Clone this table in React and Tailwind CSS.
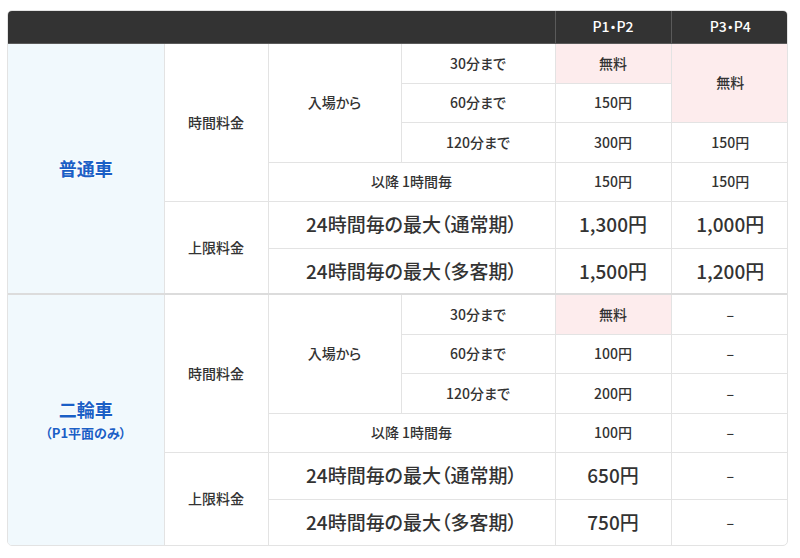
const FONT = { fontFamily: '"Noto Sans CJK JP", "Noto Sans", sans-serif' }

const cell = 'border border-[#e3e3e3] text-center align-middle'
const small = 'text-[14px] font-medium'
const big = 'text-[19px] font-medium'
const pink = 'bg-[#fdeced]'

function Section({ name, note, rows, last }) {
  const [r30, r60, r120, after, normal, busy] = rows
  const sep = last ? '' : 'border-b-2 border-b-[#dcdcdc]'
  return (
    <>
      <tr className="h-[40px]">
        <td rowSpan={6} className={`${cell} ${sep} bg-[#f1f9fd]`}>
          <div className="text-[18px] font-bold text-[#1b5fc6] leading-tight [text-shadow:0_0_3px_#fff,0_0_3px_#fff]">{name}</div>
          {note && <div className="text-[13px] font-bold text-[#1b5fc6] mt-0.5 [text-shadow:0_0_3px_#fff]">{note}</div>}
        </td>
        <td rowSpan={4} className={`${cell} ${small}`}>時間料金</td>
        <td rowSpan={3} className={`${cell} ${small}`}>入場から</td>
        <td className={`${cell} ${small}`}>30分まで</td>
        <td className={`${cell} ${small} ${r30[0].pink ? pink : ''}`}>{r30[0].v}</td>
        {r30[1] && (
          <td rowSpan={r30[1].span || 1} className={`${cell} ${small} ${r30[1].pink ? pink : ''}`}>{r30[1].v}</td>
        )}
      </tr>
      <tr className="h-[39px]">
        <td className={`${cell} ${small}`}>60分まで</td>
        <td className={`${cell} ${small}`}>{r60[0].v}</td>
        {r60[1] && <td className={`${cell} ${small}`}>{r60[1].v}</td>}
      </tr>
      <tr className="h-[40px]">
        <td className={`${cell} ${small}`}>120分まで</td>
        <td className={`${cell} ${small}`}>{r120[0].v}</td>
        <td className={`${cell} ${small}`}>{r120[1].v}</td>
      </tr>
      <tr className="h-[39px]">
        <td colSpan={2} className={`${cell} ${small}`}>以降 1時間毎</td>
        <td className={`${cell} ${small}`}>{after[0]}</td>
        <td className={`${cell} ${small}`}>{after[1]}</td>
      </tr>
      <tr className="h-[47px]">
        <td rowSpan={2} className={`${cell} ${small} ${sep}`}>上限料金</td>
        <td colSpan={2} className={`${cell} ${big}`}>24時間毎の最大（通常期）</td>
        <td className={`${cell} ${big}`}>{normal[0]}</td>
        <td className={`${cell} ${normal[1] === '–' ? small : big}`}>{normal[1]}</td>
      </tr>
      <tr className="h-[46px]">
        <td colSpan={2} className={`${cell} ${big} ${sep}`}>24時間毎の最大（多客期）</td>
        <td className={`${cell} ${big} ${sep}`}>{busy[0]}</td>
        <td className={`${cell} ${busy[1] === '–' ? small : big} ${sep}`}>{busy[1]}</td>
      </tr>
    </>
  )
}

export default function App() {
  return (
    <div className="w-[800px] h-[558px] bg-white pt-[10px] pl-[7px]" style={FONT}>
      <div className="w-[781px] rounded-[5px] overflow-hidden border border-[#e3e3e3] [font-feature-settings:'palt']">
        <table className="w-full table-fixed border-collapse border-hidden text-[#333]">
          <colgroup>
            <col className="w-[156px]" />
            <col className="w-[104px]" />
            <col className="w-[133px]" />
            <col className="w-[154px]" />
            <col className="w-[116px]" />
            <col className="w-[118px]" />
          </colgroup>
          <thead>
            <tr className="h-[32px] bg-[#333] text-white text-[14px] font-medium">
              <th colSpan={4} className="border border-[#5a5a5a]"></th>
              <th className="border border-[#5a5a5a] font-medium">P1・P2</th>
              <th className="border border-[#5a5a5a] font-medium">P3・P4</th>
            </tr>
          </thead>
          <tbody>
            <Section
              name="普通車"
              rows={[
                [{ v: '無料', pink: true }, { v: '無料', pink: true, span: 2 }],
                [{ v: '150円' }],
                [{ v: '300円' }, { v: '150円' }],
                ['150円', '150円'],
                ['1,300円', '1,000円'],
                ['1,500円', '1,200円'],
              ]}
            />
            <Section
              name="二輪車"
              note="（P1平面のみ）"
              last
              rows={[
                [{ v: '無料', pink: true }, { v: '–' }],
                [{ v: '100円' }, { v: '–' }],
                [{ v: '200円' }, { v: '–' }],
                ['100円', '–'],
                ['650円', '–'],
                ['750円', '–'],
              ]}
            />
          </tbody>
        </table>
      </div>
    </div>
  )
}
